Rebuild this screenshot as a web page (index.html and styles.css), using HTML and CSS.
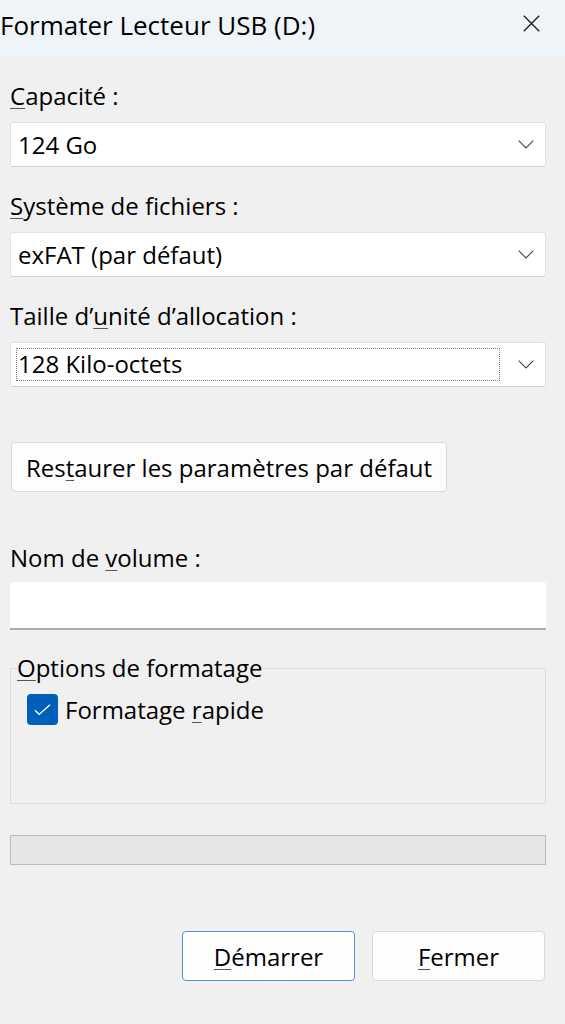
FILE: index.html
```html
<!DOCTYPE html>
<html lang="fr">
<head>
<meta charset="utf-8">
<title>Formater Lecteur USB (D:)</title>
<link rel="stylesheet" href="styles.css">
</head>
<body>
<div class="window">
  <header class="titlebar">
    <span class="title">Formater Lecteur USB (D:)</span>
    <span class="close" aria-label="Fermer">
      <svg width="17" height="17" viewBox="0 0 17 17"><path d="M0.8 0.8 L16.2 16.2 M16.2 0.8 L0.8 16.2" stroke="#1b1b1b" stroke-width="1.3" fill="none"/></svg>
    </span>
  </header>
  <main class="content">
    <div class="lbl lbl-first"><span class="ak">C</span>apacité :</div>
    <div class="combo">
      <span class="val">124 Go</span>
      <svg class="chev" width="16" height="9" viewBox="0 0 16 9"><path d="M0.7 0.7 L8 8 L15.3 0.7" stroke="#444" stroke-width="1.1" fill="none"/></svg>
    </div>

    <div class="lbl"><span class="ak">S</span>ystème de fichiers :</div>
    <div class="combo">
      <span class="val">exFAT (par défaut)</span>
      <svg class="chev" width="16" height="9" viewBox="0 0 16 9"><path d="M0.7 0.7 L8 8 L15.3 0.7" stroke="#444" stroke-width="1.1" fill="none"/></svg>
    </div>

    <div class="lbl">Taille d’<span class="ak">u</span>nité d’allocation :</div>
    <div class="combo">
      <span class="val focus">128 Kilo-octets</span>
      <svg class="chev" width="16" height="9" viewBox="0 0 16 9"><path d="M0.7 0.7 L8 8 L15.3 0.7" stroke="#444" stroke-width="1.1" fill="none"/></svg>
    </div>

    <div class="btn btn-restore">Res<span class="ak">t</span>aurer les paramètres par défaut</div>

    <div class="lbl lbl-volume">Nom de <span class="ak">v</span>olume :</div>
    <div class="input"></div>

    <fieldset class="group">
      <legend><span class="ak">O</span>ptions de formatage</legend>
      <div class="check-row">
        <span class="checkbox">
          <svg width="17" height="12" viewBox="0 0 17 12"><path d="M1 6.2 L5.2 10.4 L16 0.8" stroke="#fff" stroke-width="1.4" fill="none"/></svg>
        </span>
        <span class="check-label">Formatage <span class="ak">r</span>apide</span>
      </div>
    </fieldset>

    <div class="progress"></div>

    <div class="actions">
      <div class="btn btn-primary"><span class="ak">D</span>émarrer</div>
      <div class="btn"><span class="ak">F</span>ermer</div>
    </div>
  </main>
</div>
</body>
</html>
```

FILE: styles.css
```css
* { box-sizing: border-box; }
html, body {
  margin: 0;
  padding: 0;
  background: #f0f0f0;
}
body {
  font-family: "Open Sans", "Noto Sans", sans-serif;
  font-size: 24px;
  color: #000;
  width: 565px;
  height: 1024px;
  overflow: hidden;
}
.window {
  width: 565px;
}
.titlebar {
  height: 57px;
  background: #eff4f9;
  display: flex;
  align-items: flex-start;
  justify-content: space-between;
  padding: 0 25px 0 0;
}
.title {
  font-size: 26px;
  line-height: 34px;
  margin-top: 8px;
}
.close {
  display: flex;
  width: 17px;
  height: 17px;
  margin-top: 15px;
}
.content {
  padding: 0 19px 0 10px;
  display: flex;
  flex-direction: column;
}
.ak {
  text-decoration: underline;
  text-decoration-color: #555;
  text-underline-offset: 3px;
  text-decoration-thickness: 1px;
}
.lbl {
  line-height: 30px;
  height: 30px;
  margin-top: 24px;
  margin-bottom: 11px;
}
.lbl-first {
  margin-top: 24px;
}
.combo {
  height: 45px;
  background: #fff;
  border: 1px solid #e2e2e2;
  border-bottom-color: #d0d0d0;
  border-radius: 3px;
  display: flex;
  align-items: center;
  justify-content: space-between;
  padding: 0 11px 0 7px;
}
.val {
  line-height: 30px;
}
.val.focus {
  width: 484px;
  height: 33px;
  border: 1px dotted #7a7a7a;
  margin-left: -2px;
  padding-left: 1px;
  line-height: 30px;
}
.btn {
  height: 50px;
  background: #fdfdfd;
  border: 1px solid #d9d9d9;
  border-radius: 4px;
  display: flex;
  align-items: center;
  justify-content: center;
}
.btn-restore {
  margin-top: 55px;
  width: 436px;
  margin-left: 1px;
}
.lbl-volume {
  margin-top: 51px;
  margin-bottom: 9px;
}
.input {
  height: 48px;
  background: #fff;
  border-bottom: 2px solid #adadad;
  border-radius: 3px 3px 0 0;
}
.group {
  margin: 23px 0 0 0;
  padding: 11px 16px 0 16px;
  height: 151px;
  border: 1px solid #dcdcdc;
  min-width: 0;
}
.group legend {
  padding: 0;
  margin-left: -10px;
  line-height: 30px;
  background: #f0f0f0;
}
.check-row {
  display: flex;
  align-items: center;
  gap: 7px;
}
.checkbox {
  width: 31px;
  height: 31px;
  background: #005fb8;
  border-radius: 4px;
  display: flex;
  align-items: center;
  justify-content: center;
}
.check-label {
  line-height: 30px;
}
.progress {
  margin-top: 31px;
  height: 30px;
  background: #e6e6e6;
  border: 1px solid #bcbcbc;
}
.actions {
  margin-top: 66px;
  display: flex;
  justify-content: flex-end;
  gap: 17px;
  padding-right: 1px;
}
.actions .btn {
  width: 173px;
}
.btn-primary {
  border-color: #4f93d8;
}
```
